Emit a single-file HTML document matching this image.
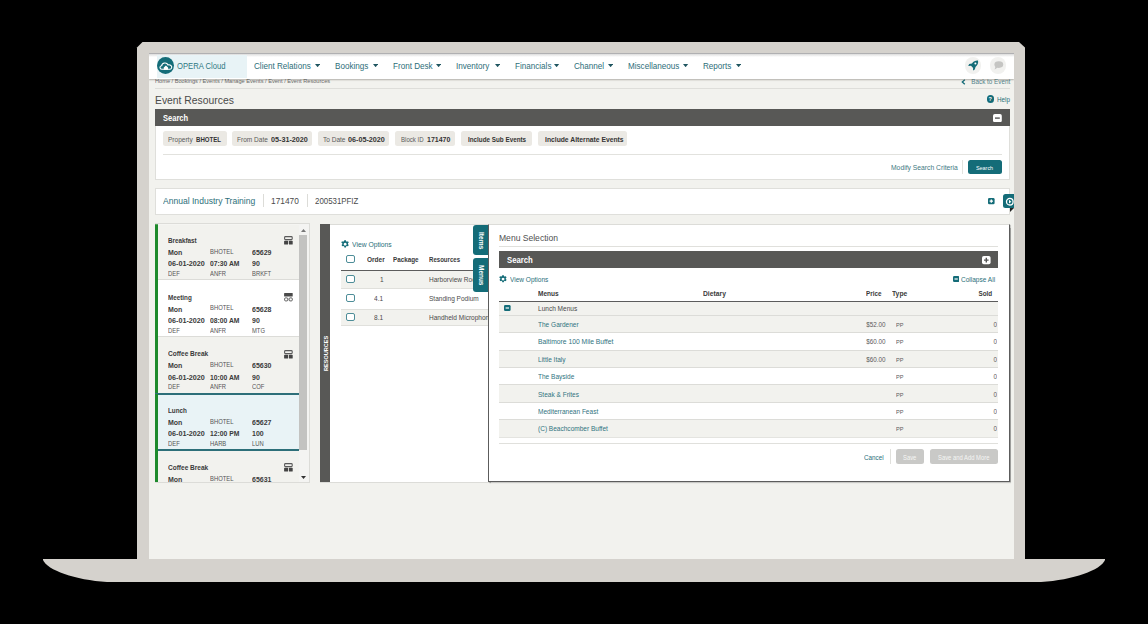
<!DOCTYPE html>
<html><head><meta charset="utf-8">
<style>
*{margin:0;padding:0;box-sizing:border-box}
html,body{width:1148px;height:624px;background:#000;overflow:hidden;font-family:"Liberation Sans",sans-serif}
.a{position:absolute}
.t{position:absolute;white-space:nowrap;line-height:1}
</style></head><body>
<svg class="a" style="left:0;top:0" width="1148" height="624"><path d="M137,47.5 L142.5,42 L1019,42 L1025,47.5 L1025,560 L137,560 Z" fill="#d5d2cd"/></svg>
<svg class="a" style="left:0;top:0" width="1148" height="624"><path d="M43,559 L1105,559 L1105,560 C1101,570 1073,580 1041,582 L107,582 C75,580 47,570 43,560 Z" fill="#d5d2cd"/></svg>
<div class="a" style="left:149px;top:53px;width:865px;height:506px;overflow:hidden;background:#f2f2ee"><div class="a" style="left:-149px;top:-53px;width:1148px;height:624px">
<div class="t" style="left:154.5px;transform-origin:0 0;top:78.00px;font-size:6.250px;color:#6a6a6a;transform:scaleX(0.9);">Home / Bookings / Events / Manage Events / Event / Event Resources</div>
<div class="a" style="left:155px;top:88px;width:855px;height:1px;background:#dededa;"></div>
<div class="t" style="right:138px;transform-origin:100% 0;top:78.00px;font-size:7.000px;color:#55828a;transform:scaleX(0.9);">Back to Event</div>
<svg class="a" style="left:961px;top:79px" width="5" height="6" viewBox="0 0 5 6"><path d="M3.8,0.8 L1.3,3 L3.8,5.2" fill="none" stroke="#146c78" stroke-width="1.3"/></svg>
<div class="a" style="left:149px;top:53px;width:865px;height:26px;background:#fff;border-top:1px solid #b0b0b2;box-shadow:0 1px 1.5px rgba(50,40,30,.33)"></div>
<div class="a" style="left:149px;top:54px;width:865px;height:2.5px;background:linear-gradient(#dcdcdc,#fff);"></div>
<div class="a" style="left:157px;top:54.5px;width:90px;height:23.8px;background:#e8f3f6;"></div>
<div class="a" style="left:157px;top:57px;width:17.4px;height:17.4px;border-radius:50%;background:#146c78"></div>
<svg class="a" style="left:157px;top:57px" width="17.4" height="17.4" viewBox="0 0 17 17"><path d="M4.6,12 C2.4,12 2.3,8.7 4.5,8.6 C5,5.4 9.6,4.8 10.7,7.7 C13,7.1 14.9,9 14.3,10.6 C14,11.5 13.4,12 12.7,12 Z" fill="none" stroke="#fff" stroke-width="1.1"/><path d="M6.6,12.4 L6.6,10.2 L8.7,8.4 L10.8,10.2 L10.8,12.4 Z" fill="#fff"/></svg>
<div class="t" style="left:177.2px;transform-origin:0 0;top:62.00px;font-size:8.500px;color:#2f7882;transform:scaleX(0.9);">OPERA Cloud</div>
<div class="t" style="left:254px;transform-origin:0 0;top:62.00px;font-size:9.000px;color:#2d6e79;transform:scaleX(0.9);">Client Relations</div>
<svg class="a" style="left:314.7px;top:64.2px" width="5.2" height="3.2" viewBox="0 0 5.2 3.2"><path d="M0,0 L5.2,0 L2.6,3.2 Z" fill="#1f5560"/></svg>
<div class="t" style="left:334.7px;transform-origin:0 0;top:62.00px;font-size:9.000px;color:#2d6e79;transform:scaleX(0.9);">Bookings</div>
<svg class="a" style="left:372.9px;top:64.2px" width="5.2" height="3.2" viewBox="0 0 5.2 3.2"><path d="M0,0 L5.2,0 L2.6,3.2 Z" fill="#1f5560"/></svg>
<div class="t" style="left:392.9px;transform-origin:0 0;top:62.00px;font-size:9.000px;color:#2d6e79;transform:scaleX(0.9);">Front Desk</div>
<svg class="a" style="left:436.0px;top:64.2px" width="5.2" height="3.2" viewBox="0 0 5.2 3.2"><path d="M0,0 L5.2,0 L2.6,3.2 Z" fill="#1f5560"/></svg>
<div class="t" style="left:455.6px;transform-origin:0 0;top:62.00px;font-size:9.000px;color:#2d6e79;transform:scaleX(0.9);">Inventory</div>
<svg class="a" style="left:495.2px;top:64.2px" width="5.2" height="3.2" viewBox="0 0 5.2 3.2"><path d="M0,0 L5.2,0 L2.6,3.2 Z" fill="#1f5560"/></svg>
<div class="t" style="left:514.8px;transform-origin:0 0;top:62.00px;font-size:9.000px;color:#2d6e79;transform:scaleX(0.9);">Financials</div>
<svg class="a" style="left:554.4px;top:64.2px" width="5.2" height="3.2" viewBox="0 0 5.2 3.2"><path d="M0,0 L5.2,0 L2.6,3.2 Z" fill="#1f5560"/></svg>
<div class="t" style="left:574px;transform-origin:0 0;top:62.00px;font-size:9.000px;color:#2d6e79;transform:scaleX(0.9);">Channel</div>
<svg class="a" style="left:608.0px;top:64.2px" width="5.2" height="3.2" viewBox="0 0 5.2 3.2"><path d="M0,0 L5.2,0 L2.6,3.2 Z" fill="#1f5560"/></svg>
<div class="t" style="left:627.6px;transform-origin:0 0;top:62.00px;font-size:9.000px;color:#2d6e79;transform:scaleX(0.9);">Miscellaneous</div>
<svg class="a" style="left:683.4px;top:64.2px" width="5.2" height="3.2" viewBox="0 0 5.2 3.2"><path d="M0,0 L5.2,0 L2.6,3.2 Z" fill="#1f5560"/></svg>
<div class="t" style="left:703.4px;transform-origin:0 0;top:62.00px;font-size:9.000px;color:#2d6e79;transform:scaleX(0.9);">Reports</div>
<svg class="a" style="left:736.1px;top:64.2px" width="5.2" height="3.2" viewBox="0 0 5.2 3.2"><path d="M0,0 L5.2,0 L2.6,3.2 Z" fill="#1f5560"/></svg>
<div class="a" style="left:964.6px;top:57.1px;width:16.8px;height:16.8px;border-radius:50%;background:#f1f1ef"></div>
<svg class="a" style="left:964.6px;top:57.1px" width="17" height="17" viewBox="0 0 17 17"><path d="M13,3.6 C10.8,3.3 8.6,4.3 7,6.4 L4.2,7.1 L3.2,8.9 L6,8.8 L8.1,10.9 L8,13.6 L9.8,12.6 L10.5,9.9 C12.6,8.3 13.6,6 13,3.6 Z" fill="#146c78"/><circle cx="10.4" cy="6.4" r="1" fill="#fff"/></svg>
<div class="a" style="left:989.6px;top:57.1px;width:16.8px;height:16.8px;border-radius:50%;background:#f1f1ef"></div>
<svg class="a" style="left:989.6px;top:57.1px" width="17" height="17" viewBox="0 0 17 17"><ellipse cx="8.8" cy="7.6" rx="4.4" ry="3.3" fill="#c5c5c3"/><path d="M5.6,9.2 L4.6,12.4 L7.8,10.4 Z" fill="#c5c5c3"/></svg>
<div class="t" style="left:154.8px;transform-origin:0 0;top:95.00px;font-size:11.500px;color:#4a4a4a;transform:scaleX(0.9);">Event Resources</div>
<div class="a" style="left:986.7px;top:95px;width:7.6px;height:7.6px;border-radius:50%;background:#146c78"></div>
<div class="t" style="left:988.6px;transform-origin:0 0;top:97.00px;font-size:5.500px;color:#fff;font-weight:bold;transform:scaleX(1);">?</div>
<div class="t" style="left:997px;transform-origin:0 0;top:96.00px;font-size:7.000px;color:#2a6f7a;transform:scaleX(0.9);">Help</div>
<div class="a" style="left:155px;top:109px;width:855px;height:71px;background:#fff;border:1px solid #dfdfdb"></div>
<div class="a" style="left:155px;top:109px;width:855px;height:16.7px;background:#585856;"></div>
<div class="t" style="left:162.6px;transform-origin:0 0;top:114.00px;font-size:8.750px;color:#fff;font-weight:bold;transform:scaleX(0.86);">Search</div>
<svg class="a" style="left:993.2px;top:113.8px" width="9" height="8.5" viewBox="0 0 9 8.5"><rect x="0" y="0" width="8.8" height="8.2" rx="1.8" fill="#fff"/><path d="M2,4.1 H6.8" stroke="#555" stroke-width="1.4"/></svg>
<div class="a" style="left:163.1px;top:131.1px;width:63.5px;height:14.7px;background:#ebe9e4;border-radius:2.5px"></div>
<div class="t" style="left:168px;transform-origin:0 0;top:136.00px;font-size:7.250px;color:#5a5a5a;transform:scaleX(0.9);">Property</div>
<div class="t" style="left:195.7px;transform-origin:0 0;top:137.00px;font-size:6.750px;color:#333;font-weight:bold;transform:scaleX(0.9);">BHOTEL</div>
<div class="a" style="left:232px;top:131.1px;width:79.80000000000001px;height:14.7px;background:#ebe9e4;border-radius:2.5px"></div>
<div class="t" style="left:236.9px;transform-origin:0 0;top:136.00px;font-size:7.250px;color:#5a5a5a;transform:scaleX(0.9);">From Date</div>
<div class="t" style="left:270.6px;transform-origin:0 0;top:136.00px;font-size:8.000px;color:#333;font-weight:bold;transform:scaleX(0.9);">05-31-2020</div>
<div class="a" style="left:317.8px;top:131.1px;width:71.39999999999998px;height:14.7px;background:#ebe9e4;border-radius:2.5px"></div>
<div class="t" style="left:322.6px;transform-origin:0 0;top:136.00px;font-size:7.250px;color:#5a5a5a;transform:scaleX(0.9);">To Date</div>
<div class="t" style="left:348.1px;transform-origin:0 0;top:136.00px;font-size:8.000px;color:#333;font-weight:bold;transform:scaleX(0.9);">06-05-2020</div>
<div class="a" style="left:395.2px;top:131.1px;width:59.69999999999999px;height:14.7px;background:#ebe9e4;border-radius:2.5px"></div>
<div class="t" style="left:400.6px;transform-origin:0 0;top:137.00px;font-size:6.750px;color:#5a5a5a;transform:scaleX(0.9);">Block ID</div>
<div class="t" style="left:426.7px;transform-origin:0 0;top:136.00px;font-size:7.750px;color:#333;font-weight:bold;transform:scaleX(0.9);">171470</div>
<div class="a" style="left:461px;top:131.1px;width:71px;height:14.7px;background:#ebe9e4;border-radius:2.5px"></div>
<div class="t" style="left:468px;transform-origin:0 0;top:136.00px;font-size:7.000px;color:#333;font-weight:bold;transform:scaleX(0.9);">Include Sub Events</div>
<div class="a" style="left:537.6px;top:131.1px;width:89.4px;height:14.7px;background:#ebe9e4;border-radius:2.5px"></div>
<div class="t" style="left:545px;transform-origin:0 0;top:136.00px;font-size:7.500px;color:#333;font-weight:bold;transform:scaleX(0.9);">Include Alternate Events</div>
<div class="a" style="left:163px;top:153.5px;width:839px;height:1px;background:#e2e2de;"></div>
<div class="t" style="left:891px;transform-origin:0 0;top:164.00px;font-size:7.500px;color:#3f7983;transform:scaleX(0.9);">Modify Search Criteria</div>
<div class="a" style="left:962.2px;top:160px;width:1px;height:14px;background:#e2e2de;"></div>
<div class="a" style="left:967.8px;top:159.5px;width:34.2px;height:14.8px;background:#146c78;border-radius:2.5px"></div>
<div class="t" style="left:975.7px;transform-origin:0 0;top:165.00px;font-size:6.000px;color:#fff;transform:scaleX(0.9);">Search</div>
<div class="a" style="left:155px;top:188.2px;width:855px;height:26.6px;background:#fff;border:1px solid #dfdfdb"></div>
<div class="t" style="left:162.6px;transform-origin:0 0;top:196.00px;font-size:9.500px;color:#2e6f7a;transform:scaleX(0.9);">Annual Industry Training</div>
<div class="a" style="left:263.2px;top:194px;width:1px;height:13px;background:#dcdcd8;"></div>
<div class="t" style="left:271.3px;transform-origin:0 0;top:197.00px;font-size:9.250px;color:#4a4a4a;transform:scaleX(0.9);">171470</div>
<div class="a" style="left:307px;top:194px;width:1px;height:13px;background:#dcdcd8;"></div>
<div class="t" style="left:315px;transform-origin:0 0;top:197.00px;font-size:8.750px;color:#4a4a4a;transform:scaleX(0.9);">200531PFIZ</div>
<svg class="a" style="left:988px;top:197.5px" width="7" height="7" viewBox="0 0 7 7"><rect x="0" y="0" width="6.6" height="6.3" rx="1.3" fill="#146c78"/><path d="M1.6,3.15 H5 M3.3,1.5 V4.8" stroke="#fff" stroke-width="1.3"/></svg>
<div class="a" style="left:1002.7px;top:193.8px;width:14px;height:14.2px;background:#146c78;border-radius:2.5px 0 0 2.5px"></div>
<svg class="a" style="left:1005px;top:196.5px" width="10" height="10" viewBox="0 0 10 10"><circle cx="4.8" cy="4.7" r="3.3" fill="#146c78" stroke="#fff" stroke-width="1.3"/><path d="M6.4,4.7 L4,2.8 L4,6.6 Z" fill="#fff"/></svg>
<svg class="a" style="left:1010px;top:208px" width="4" height="4"><path d="M0,4 L4,0 L0,0 Z" fill="#222"/></svg>
<div class="a" style="left:155px;top:223.3px;width:155px;height:259.5px;background:#fff;border:1px solid #dcdcd8"></div>
<div class="a" style="left:0;top:0;width:1148px;height:624px;clip-path:inset(224.3px 0 142px 0)">
<div class="a" style="left:155px;top:223.5px;width:144px;height:56.8px;background:#f2f2ee;"></div>
<div class="a" style="left:155px;top:279.3px;width:144px;height:1px;background:#dcdcd8;"></div>
<div class="a" style="left:155px;top:223.5px;width:3px;height:56.8px;background:#1e8a2c;"></div>
<div class="t" style="left:167.7px;transform-origin:0 0;top:237.00px;font-size:7.000px;color:#3a3a3a;font-weight:bold;transform:scaleX(0.9);">Breakfast</div>
<svg class="a" style="left:284px;top:236.1px" width="9" height="9" viewBox="0 0 9 9"><rect x="0.6" y="0.6" width="7.6" height="3" rx="0.8" fill="none" stroke="#5a5a5a" stroke-width="1.1"/><rect x="0.1" y="4.8" width="4" height="3.8" rx="0.6" fill="#444"/><rect x="4.9" y="4.8" width="3.8" height="3.8" rx="0.6" fill="#444"/></svg>
<div class="t" style="left:167.8px;transform-origin:0 0;top:249.00px;font-size:7.750px;color:#3a3a3a;font-weight:bold;transform:scaleX(0.9);">Mon</div>
<div class="t" style="left:209.6px;transform-origin:0 0;top:249.00px;font-size:6.500px;color:#555;transform:scaleX(0.9);">BHOTEL</div>
<div class="t" style="left:251.5px;transform-origin:0 0;top:249.00px;font-size:7.750px;color:#3a3a3a;font-weight:bold;transform:scaleX(0.9);">65629</div>
<div class="t" style="left:167.7px;transform-origin:0 0;top:260.00px;font-size:8.000px;color:#3a3a3a;font-weight:bold;transform:scaleX(0.9);">06-01-2020</div>
<div class="t" style="left:209.6px;transform-origin:0 0;top:260.00px;font-size:7.500px;color:#3a3a3a;font-weight:bold;transform:scaleX(0.9);">07:30 AM</div>
<div class="t" style="left:251.5px;transform-origin:0 0;top:260.00px;font-size:7.750px;color:#3a3a3a;font-weight:bold;transform:scaleX(0.9);">90</div>
<div class="t" style="left:167.7px;transform-origin:0 0;top:271.00px;font-size:6.500px;color:#555;transform:scaleX(0.9);">DEF</div>
<div class="t" style="left:209.6px;transform-origin:0 0;top:271.00px;font-size:6.500px;color:#555;transform:scaleX(0.9);">ANFR</div>
<div class="t" style="left:251.5px;transform-origin:0 0;top:271.00px;font-size:6.500px;color:#555;transform:scaleX(0.9);">BRKFT</div>
<div class="a" style="left:155px;top:280.3px;width:144px;height:56.8px;background:#fff;"></div>
<div class="a" style="left:155px;top:336.1px;width:144px;height:1px;background:#dcdcd8;"></div>
<div class="a" style="left:155px;top:280.3px;width:3px;height:56.8px;background:#1e8a2c;"></div>
<div class="t" style="left:167.7px;transform-origin:0 0;top:294.00px;font-size:7.000px;color:#3a3a3a;font-weight:bold;transform:scaleX(0.9);">Meeting</div>
<svg class="a" style="left:284px;top:292.9px" width="9" height="9" viewBox="0 0 9 9"><rect x="0.1" y="0" width="8.6" height="3.5" rx="0.5" fill="#4a4a4a"/><rect x="0.6" y="4.9" width="3.2" height="3" rx="1" fill="none" stroke="#5a5a5a" stroke-width="1"/><rect x="5.1" y="4.9" width="3.2" height="3" rx="1" fill="none" stroke="#5a5a5a" stroke-width="1"/></svg>
<div class="t" style="left:167.8px;transform-origin:0 0;top:306.00px;font-size:7.750px;color:#3a3a3a;font-weight:bold;transform:scaleX(0.9);">Mon</div>
<div class="t" style="left:209.6px;transform-origin:0 0;top:305.00px;font-size:6.500px;color:#555;transform:scaleX(0.9);">BHOTEL</div>
<div class="t" style="left:251.5px;transform-origin:0 0;top:306.00px;font-size:7.750px;color:#3a3a3a;font-weight:bold;transform:scaleX(0.9);">65628</div>
<div class="t" style="left:167.7px;transform-origin:0 0;top:317.00px;font-size:8.000px;color:#3a3a3a;font-weight:bold;transform:scaleX(0.9);">06-01-2020</div>
<div class="t" style="left:209.6px;transform-origin:0 0;top:317.00px;font-size:7.500px;color:#3a3a3a;font-weight:bold;transform:scaleX(0.9);">08:00 AM</div>
<div class="t" style="left:251.5px;transform-origin:0 0;top:317.00px;font-size:7.750px;color:#3a3a3a;font-weight:bold;transform:scaleX(0.9);">90</div>
<div class="t" style="left:167.7px;transform-origin:0 0;top:328.00px;font-size:6.500px;color:#555;transform:scaleX(0.9);">DEF</div>
<div class="t" style="left:209.6px;transform-origin:0 0;top:328.00px;font-size:6.500px;color:#555;transform:scaleX(0.9);">ANFR</div>
<div class="t" style="left:251.5px;transform-origin:0 0;top:328.00px;font-size:6.500px;color:#555;transform:scaleX(0.9);">MTG</div>
<div class="a" style="left:155px;top:337.1px;width:144px;height:56.8px;background:#f2f2ee;"></div>
<div class="a" style="left:155px;top:392.90000000000003px;width:144px;height:1px;background:#dcdcd8;"></div>
<div class="a" style="left:155px;top:337.1px;width:3px;height:56.8px;background:#1e8a2c;"></div>
<div class="t" style="left:167.7px;transform-origin:0 0;top:350.00px;font-size:7.250px;color:#3a3a3a;font-weight:bold;transform:scaleX(0.9);">Coffee Break</div>
<svg class="a" style="left:284px;top:349.7px" width="9" height="9" viewBox="0 0 9 9"><rect x="0.6" y="0.6" width="7.6" height="3" rx="0.8" fill="none" stroke="#5a5a5a" stroke-width="1.1"/><rect x="0.1" y="4.8" width="4" height="3.8" rx="0.6" fill="#444"/><rect x="4.9" y="4.8" width="3.8" height="3.8" rx="0.6" fill="#444"/></svg>
<div class="t" style="left:167.8px;transform-origin:0 0;top:362.00px;font-size:7.750px;color:#3a3a3a;font-weight:bold;transform:scaleX(0.9);">Mon</div>
<div class="t" style="left:209.6px;transform-origin:0 0;top:362.00px;font-size:6.500px;color:#555;transform:scaleX(0.9);">BHOTEL</div>
<div class="t" style="left:251.5px;transform-origin:0 0;top:362.00px;font-size:7.750px;color:#3a3a3a;font-weight:bold;transform:scaleX(0.9);">65630</div>
<div class="t" style="left:167.7px;transform-origin:0 0;top:374.00px;font-size:8.000px;color:#3a3a3a;font-weight:bold;transform:scaleX(0.9);">06-01-2020</div>
<div class="t" style="left:209.6px;transform-origin:0 0;top:374.00px;font-size:7.500px;color:#3a3a3a;font-weight:bold;transform:scaleX(0.9);">10:00 AM</div>
<div class="t" style="left:251.5px;transform-origin:0 0;top:374.00px;font-size:7.750px;color:#3a3a3a;font-weight:bold;transform:scaleX(0.9);">90</div>
<div class="t" style="left:167.7px;transform-origin:0 0;top:384.00px;font-size:6.500px;color:#555;transform:scaleX(0.9);">DEF</div>
<div class="t" style="left:209.6px;transform-origin:0 0;top:384.00px;font-size:6.500px;color:#555;transform:scaleX(0.9);">ANFR</div>
<div class="t" style="left:251.5px;transform-origin:0 0;top:384.00px;font-size:6.500px;color:#555;transform:scaleX(0.9);">COF</div>
<div class="a" style="left:155px;top:393.9px;width:144px;height:56.8px;background:#e9f3f6;"></div>
<div class="a" style="left:155px;top:449.7px;width:144px;height:1px;background:#dcdcd8;"></div>
<div class="a" style="left:155px;top:393.9px;width:3px;height:56.8px;background:#1e8a2c;"></div>
<div class="a" style="left:155px;top:393.4px;width:144px;height:1.5px;background:#2d6f79;"></div>
<div class="a" style="left:155px;top:449.2px;width:144px;height:1.5px;background:#2d6f79;"></div>
<div class="a" style="left:155px;top:393.9px;width:3px;height:56.8px;background:#1e8a2c;"></div>
<div class="t" style="left:167.7px;transform-origin:0 0;top:407.00px;font-size:7.000px;color:#3a3a3a;font-weight:bold;transform:scaleX(0.9);">Lunch</div>
<div class="t" style="left:167.8px;transform-origin:0 0;top:419.00px;font-size:7.750px;color:#3a3a3a;font-weight:bold;transform:scaleX(0.9);">Mon</div>
<div class="t" style="left:209.6px;transform-origin:0 0;top:419.00px;font-size:6.500px;color:#555;transform:scaleX(0.9);">BHOTEL</div>
<div class="t" style="left:251.5px;transform-origin:0 0;top:419.00px;font-size:7.750px;color:#3a3a3a;font-weight:bold;transform:scaleX(0.9);">65627</div>
<div class="t" style="left:167.7px;transform-origin:0 0;top:430.00px;font-size:8.000px;color:#3a3a3a;font-weight:bold;transform:scaleX(0.9);">06-01-2020</div>
<div class="t" style="left:209.6px;transform-origin:0 0;top:430.00px;font-size:7.500px;color:#3a3a3a;font-weight:bold;transform:scaleX(0.9);">12:00 PM</div>
<div class="t" style="left:251.5px;transform-origin:0 0;top:430.00px;font-size:7.750px;color:#3a3a3a;font-weight:bold;transform:scaleX(0.9);">100</div>
<div class="t" style="left:167.7px;transform-origin:0 0;top:441.00px;font-size:6.500px;color:#555;transform:scaleX(0.9);">DEF</div>
<div class="t" style="left:209.6px;transform-origin:0 0;top:441.00px;font-size:6.500px;color:#555;transform:scaleX(0.9);">HARB</div>
<div class="t" style="left:251.5px;transform-origin:0 0;top:441.00px;font-size:6.500px;color:#555;transform:scaleX(0.9);">LUN</div>
<div class="a" style="left:155px;top:450.7px;width:144px;height:56.8px;background:#f2f2ee;"></div>
<div class="a" style="left:155px;top:506.5px;width:144px;height:1px;background:#dcdcd8;"></div>
<div class="a" style="left:155px;top:450.7px;width:3px;height:56.8px;background:#1e8a2c;"></div>
<div class="t" style="left:167.7px;transform-origin:0 0;top:464.00px;font-size:7.250px;color:#3a3a3a;font-weight:bold;transform:scaleX(0.9);">Coffee Break</div>
<svg class="a" style="left:284px;top:463.3px" width="9" height="9" viewBox="0 0 9 9"><rect x="0.6" y="0.6" width="7.6" height="3" rx="0.8" fill="none" stroke="#5a5a5a" stroke-width="1.1"/><rect x="0.1" y="4.8" width="4" height="3.8" rx="0.6" fill="#444"/><rect x="4.9" y="4.8" width="3.8" height="3.8" rx="0.6" fill="#444"/></svg>
<div class="t" style="left:167.8px;transform-origin:0 0;top:476.00px;font-size:7.750px;color:#3a3a3a;font-weight:bold;transform:scaleX(0.9);">Mon</div>
<div class="t" style="left:209.6px;transform-origin:0 0;top:476.00px;font-size:6.500px;color:#555;transform:scaleX(0.9);">BHOTEL</div>
<div class="t" style="left:251.5px;transform-origin:0 0;top:476.00px;font-size:7.750px;color:#3a3a3a;font-weight:bold;transform:scaleX(0.9);">65631</div>
</div>
<div class="a" style="left:299px;top:224.3px;width:9.5px;height:258px;background:#f4f4f2;"></div>
<div class="a" style="left:299px;top:235.3px;width:8.2px;height:215px;background:#c3c3c1;"></div>
<svg class="a" style="left:300.5px;top:228.5px" width="5" height="3"><path d="M0,3 L5,3 L2.5,0 Z" fill="#777"/></svg>
<svg class="a" style="left:300.5px;top:475.5px" width="5" height="3"><path d="M0,0 L5,0 L2.5,3 Z" fill="#333"/></svg>
<div class="a" style="left:320.2px;top:223.5px;width:170px;height:259px;background:#fff;border:1px solid #dcdcd8"></div>
<div class="a" style="left:320.2px;top:223.8px;width:9.8px;height:258.7px;background:#585856;"></div>
<div class="t" style="left:322.8px;top:371px;font-size:6.2px;color:#fff;font-weight:bold;transform:rotate(-90deg) scaleX(0.9);transform-origin:0 0">RESOURCES</div>
<svg class="a" style="left:341px;top:240.4px" width="8.3" height="8.3" viewBox="0 0 16 16"><path fill="#146c78" fill-rule="evenodd" d="M6.5,0.3h3l0.45,2.1c0.55,0.2,1.05,0.45,1.5,0.8l2.05-0.75l1.5,2.6l-1.6,1.45c0.08,0.55,0.08,1.05,0,1.6l1.6,1.45l-1.5,2.6l-2.05-0.75c-0.45,0.35-0.95,0.6-1.5,0.8l-0.45,2.1h-3l-0.45-2.1c-0.55-0.2-1.05-0.45-1.5-0.8l-2.05,0.75l-1.5-2.6l1.6-1.45c-0.08-0.55-0.08-1.05,0-1.6L0.45,5.05l1.5-2.6l2.05,0.75c0.45-0.35,0.95-0.6,1.5-0.8z M8,5.2a2.8,2.8 0 1,0 0.01,0z"/></svg>
<div class="t" style="left:351.5px;transform-origin:0 0;top:241.00px;font-size:7.500px;color:#2a6f7a;transform:scaleX(0.9);">View Options</div>
<div class="a" style="left:346px;top:255.3px;width:8.8px;height:8.2px;border:1.2px solid #4d8d98;border-radius:2px;background:#fff"></div>
<div class="t" style="left:367px;transform-origin:0 0;top:256.00px;font-size:7.250px;color:#3a3a3a;font-weight:bold;transform:scaleX(0.9);">Order</div>
<div class="t" style="left:392.9px;transform-origin:0 0;top:256.00px;font-size:7.000px;color:#3a3a3a;font-weight:bold;transform:scaleX(0.9);">Package</div>
<div class="t" style="left:429px;transform-origin:0 0;top:257.00px;font-size:6.750px;color:#3a3a3a;font-weight:bold;transform:scaleX(0.9);">Resources</div>
<div class="a" style="left:341px;top:270.1px;width:149px;height:1.2px;background:#5c5c5c;"></div>
<div class="a" style="left:341px;top:271.3px;width:149px;height:17.099999999999966px;background:#f2f2ee;"></div>
<div class="a" style="left:341px;top:287.9px;width:149px;height:1px;background:#e0e0dc;"></div>
<div class="a" style="left:346px;top:274.8px;width:8.8px;height:8.2px;border:1.2px solid #4d8d98;border-radius:2px;background:#fff"></div>
<div class="t" style="left:380.2px;transform-origin:0 0;top:276.00px;font-size:7.250px;color:#4a4a4a;transform:scaleX(0.9);">1</div>
<div class="t" style="left:429px;transform-origin:0 0;top:276.00px;font-size:7.250px;color:#4a4a4a;transform:scaleX(0.9);">Harborview Room</div>
<div class="a" style="left:341px;top:289.4px;width:149px;height:19.700000000000045px;background:#fff;"></div>
<div class="a" style="left:341px;top:308.6px;width:149px;height:1px;background:#e0e0dc;"></div>
<div class="a" style="left:346px;top:294.3px;width:8.8px;height:8.2px;border:1.2px solid #4d8d98;border-radius:2px;background:#fff"></div>
<div class="t" style="left:373.6px;transform-origin:0 0;top:295.00px;font-size:7.250px;color:#4a4a4a;transform:scaleX(0.9);">4.1</div>
<div class="t" style="left:429px;transform-origin:0 0;top:295.00px;font-size:7.250px;color:#4a4a4a;transform:scaleX(0.9);">Standing Podium</div>
<div class="a" style="left:341px;top:310.1px;width:149px;height:15.5px;background:#f2f2ee;"></div>
<div class="a" style="left:341px;top:325.1px;width:149px;height:1px;background:#e0e0dc;"></div>
<div class="a" style="left:346px;top:312.6px;width:8.8px;height:8.2px;border:1.2px solid #4d8d98;border-radius:2px;background:#fff"></div>
<div class="t" style="left:373.6px;transform-origin:0 0;top:314.00px;font-size:7.250px;color:#4a4a4a;transform:scaleX(0.9);">8.1</div>
<div class="t" style="left:429px;transform-origin:0 0;top:314.00px;font-size:7.250px;color:#4a4a4a;transform:scaleX(0.9);">Handheld Microphone</div>
<div class="a" style="left:488.3px;top:223.5px;width:521.7px;height:258.5px;background:#fff;border:1px solid #5c5c5c;border-top-color:#dcdcd8;box-shadow:0.5px 1px 1px rgba(0,0,0,.35)"></div>
<div class="a" style="left:472.8px;top:224.5px;width:15.5px;height:30.4px;background:#146c78;border-radius:3px 0 0 3px"></div>
<div class="t" style="left:484.6px;top:231.5px;font-size:7.8px;color:#fff;font-weight:bold;transform:rotate(90deg) scaleX(0.85);transform-origin:0 0">Items</div>
<div class="a" style="left:472.8px;top:258.2px;width:15.5px;height:34.2px;background:#146c78;border-radius:3px 0 0 3px"></div>
<div class="t" style="left:484.6px;top:264.8px;font-size:7.6px;color:#fff;font-weight:bold;transform:rotate(90deg) scaleX(0.85);transform-origin:0 0">Menus</div>
<div class="t" style="left:499px;transform-origin:0 0;top:233.00px;font-size:9.500px;color:#505050;transform:scaleX(0.9);">Menu Selection</div>
<div class="a" style="left:499px;top:245.5px;width:499px;height:1px;background:#e0e0dc;"></div>
<div class="a" style="left:499px;top:251.3px;width:499px;height:16.6px;background:#585856;"></div>
<div class="t" style="left:506.8px;transform-origin:0 0;top:256.00px;font-size:9.000px;color:#fff;font-weight:bold;transform:scaleX(0.86);">Search</div>
<svg class="a" style="left:981.5px;top:256px" width="9" height="8.5" viewBox="0 0 9 8.5"><rect x="0" y="0" width="8.6" height="8.2" rx="1.8" fill="#fff"/><path d="M2,4.1 H6.6 M4.3,1.8 V6.4" stroke="#555" stroke-width="1.4"/></svg>
<svg class="a" style="left:499.1px;top:275.3px" width="8.1" height="8.1" viewBox="0 0 16 16"><path fill="#146c78" fill-rule="evenodd" d="M6.5,0.3h3l0.45,2.1c0.55,0.2,1.05,0.45,1.5,0.8l2.05-0.75l1.5,2.6l-1.6,1.45c0.08,0.55,0.08,1.05,0,1.6l1.6,1.45l-1.5,2.6l-2.05-0.75c-0.45,0.35-0.95,0.6-1.5,0.8l-0.45,2.1h-3l-0.45-2.1c-0.55-0.2-1.05-0.45-1.5-0.8l-2.05,0.75l-1.5-2.6l1.6-1.45c-0.08-0.55-0.08-1.05,0-1.6L0.45,5.05l1.5-2.6l2.05,0.75c0.45-0.35,0.95-0.6,1.5-0.8z M8,5.2a2.8,2.8 0 1,0 0.01,0z"/></svg>
<div class="t" style="left:509.8px;transform-origin:0 0;top:276.00px;font-size:7.250px;color:#2a6f7a;transform:scaleX(0.9);">View Options</div>
<svg class="a" style="left:952.8px;top:276.4px" width="6.5" height="6.5" viewBox="0 0 6.5 6.5"><rect x="0" y="0" width="6.3" height="6" rx="1.2" fill="#146c78"/><path d="M1.5,3 H4.8" stroke="#fff" stroke-width="1.2"/></svg>
<div class="t" style="left:960.7px;transform-origin:0 0;top:276.00px;font-size:7.250px;color:#2a6f7a;transform:scaleX(0.9);">Collapse All</div>
<div class="t" style="left:537.8px;transform-origin:0 0;top:290.00px;font-size:7.250px;color:#3a3a3a;font-weight:bold;transform:scaleX(0.9);">Menus</div>
<div class="t" style="left:703px;transform-origin:0 0;top:290.00px;font-size:7.500px;color:#3a3a3a;font-weight:bold;transform:scaleX(0.9);">Dietary</div>
<div class="t" style="left:866px;transform-origin:0 0;top:290.00px;font-size:7.000px;color:#3a3a3a;font-weight:bold;transform:scaleX(0.9);">Price</div>
<div class="t" style="left:892px;transform-origin:0 0;top:290.00px;font-size:7.500px;color:#3a3a3a;font-weight:bold;transform:scaleX(0.9);">Type</div>
<div class="t" style="right:155.60000000000002px;transform-origin:100% 0;top:290.00px;font-size:7.000px;color:#3a3a3a;font-weight:bold;transform:scaleX(0.9);">Sold</div>
<div class="a" style="left:499px;top:301px;width:499px;height:1.2px;background:#5c5c5c;"></div>
<div class="a" style="left:499px;top:302.2px;width:499px;height:13px;background:#f2f2ee;"></div>
<svg class="a" style="left:504px;top:304.8px" width="7" height="6.5" viewBox="0 0 7 6.5"><rect x="0" y="0" width="6.6" height="6" rx="1.3" fill="#146c78"/><path d="M1.6,3 H5" stroke="#fff" stroke-width="1.2"/></svg>
<div class="t" style="left:538px;transform-origin:0 0;top:305.00px;font-size:7.250px;color:#4a4a4a;transform:scaleX(0.9);">Lunch Menus</div>
<div class="a" style="left:499px;top:315.3px;width:499px;height:17.4px;background:#f2f2ee;"></div>
<div class="a" style="left:499px;top:314.8px;width:499px;height:1px;background:#dcdcd8;"></div>
<div class="t" style="left:538.3px;transform-origin:0 0;top:321.00px;font-size:7.250px;color:#2f7380;transform:scaleX(0.9);">The Gardener</div>
<div class="t" style="right:262.4px;transform-origin:100% 0;top:321.00px;font-size:7.000px;color:#5a5a5a;transform:scaleX(0.9);">$52.00</div>
<div class="t" style="left:895.6px;transform-origin:0 0;top:322.00px;font-size:6.250px;color:#5a5a5a;transform:scaleX(0.9);">PP</div>
<div class="t" style="right:151.60000000000002px;transform-origin:100% 0;top:321.00px;font-size:7.000px;color:#5a5a5a;transform:scaleX(0.9);">0</div>
<div class="a" style="left:499px;top:332.7px;width:499px;height:17.4px;background:#fff;"></div>
<div class="a" style="left:499px;top:332.2px;width:499px;height:1px;background:#dcdcd8;"></div>
<div class="t" style="left:538.3px;transform-origin:0 0;top:338.00px;font-size:7.500px;color:#2f7380;transform:scaleX(0.9);">Baltimore 100 Mile Buffet</div>
<div class="t" style="right:262.4px;transform-origin:100% 0;top:338.00px;font-size:7.000px;color:#5a5a5a;transform:scaleX(0.9);">$60.00</div>
<div class="t" style="left:895.6px;transform-origin:0 0;top:339.00px;font-size:6.250px;color:#5a5a5a;transform:scaleX(0.9);">PP</div>
<div class="t" style="right:151.60000000000002px;transform-origin:100% 0;top:338.00px;font-size:7.000px;color:#5a5a5a;transform:scaleX(0.9);">0</div>
<div class="a" style="left:499px;top:350.09999999999997px;width:499px;height:17.4px;background:#f2f2ee;"></div>
<div class="a" style="left:499px;top:349.59999999999997px;width:499px;height:1px;background:#dcdcd8;"></div>
<div class="t" style="left:538.3px;transform-origin:0 0;top:356.00px;font-size:7.250px;color:#2f7380;transform:scaleX(0.9);">Little Italy</div>
<div class="t" style="right:262.4px;transform-origin:100% 0;top:356.00px;font-size:7.000px;color:#5a5a5a;transform:scaleX(0.9);">$60.00</div>
<div class="t" style="left:895.6px;transform-origin:0 0;top:357.00px;font-size:6.250px;color:#5a5a5a;transform:scaleX(0.9);">PP</div>
<div class="t" style="right:151.60000000000002px;transform-origin:100% 0;top:356.00px;font-size:7.000px;color:#5a5a5a;transform:scaleX(0.9);">0</div>
<div class="a" style="left:499px;top:367.49999999999994px;width:499px;height:17.4px;background:#fff;"></div>
<div class="a" style="left:499px;top:366.99999999999994px;width:499px;height:1px;background:#dcdcd8;"></div>
<div class="t" style="left:538.3px;transform-origin:0 0;top:373.00px;font-size:7.250px;color:#2f7380;transform:scaleX(0.9);">The Bayside</div>
<div class="t" style="left:895.6px;transform-origin:0 0;top:374.00px;font-size:6.250px;color:#5a5a5a;transform:scaleX(0.9);">PP</div>
<div class="t" style="right:151.60000000000002px;transform-origin:100% 0;top:373.00px;font-size:7.000px;color:#5a5a5a;transform:scaleX(0.9);">0</div>
<div class="a" style="left:499px;top:384.8999999999999px;width:499px;height:17.4px;background:#f2f2ee;"></div>
<div class="a" style="left:499px;top:384.3999999999999px;width:499px;height:1px;background:#dcdcd8;"></div>
<div class="t" style="left:538.3px;transform-origin:0 0;top:391.00px;font-size:7.250px;color:#2f7380;transform:scaleX(0.9);">Steak &amp; Frites</div>
<div class="t" style="left:895.6px;transform-origin:0 0;top:392.00px;font-size:6.250px;color:#5a5a5a;transform:scaleX(0.9);">PP</div>
<div class="t" style="right:151.60000000000002px;transform-origin:100% 0;top:391.00px;font-size:7.000px;color:#5a5a5a;transform:scaleX(0.9);">0</div>
<div class="a" style="left:499px;top:402.2999999999999px;width:499px;height:17.4px;background:#fff;"></div>
<div class="a" style="left:499px;top:401.7999999999999px;width:499px;height:1px;background:#dcdcd8;"></div>
<div class="t" style="left:538.3px;transform-origin:0 0;top:408.00px;font-size:7.250px;color:#2f7380;transform:scaleX(0.9);">Mediterranean Feast</div>
<div class="t" style="left:895.6px;transform-origin:0 0;top:409.00px;font-size:6.250px;color:#5a5a5a;transform:scaleX(0.9);">PP</div>
<div class="t" style="right:151.60000000000002px;transform-origin:100% 0;top:408.00px;font-size:7.000px;color:#5a5a5a;transform:scaleX(0.9);">0</div>
<div class="a" style="left:499px;top:419.6999999999999px;width:499px;height:17.4px;background:#f2f2ee;"></div>
<div class="a" style="left:499px;top:419.1999999999999px;width:499px;height:1px;background:#dcdcd8;"></div>
<div class="a" style="left:499px;top:436.59999999999985px;width:499px;height:1px;background:#e4e4e0;"></div>
<div class="t" style="left:538.3px;transform-origin:0 0;top:425.00px;font-size:7.250px;color:#2f7380;transform:scaleX(0.9);">(C) Beachcomber Buffet</div>
<div class="t" style="left:895.6px;transform-origin:0 0;top:426.00px;font-size:6.250px;color:#5a5a5a;transform:scaleX(0.9);">PP</div>
<div class="t" style="right:151.60000000000002px;transform-origin:100% 0;top:425.00px;font-size:7.000px;color:#5a5a5a;transform:scaleX(0.9);">0</div>
<div class="a" style="left:499px;top:442.8px;width:499px;height:1px;background:#e0e0dc;"></div>
<div class="t" style="left:864.4px;transform-origin:0 0;top:454.00px;font-size:7.000px;color:#2a6f7a;transform:scaleX(0.9);">Cancel</div>
<div class="a" style="left:889.6px;top:449px;width:1px;height:15px;background:#e0e0dc;"></div>
<div class="a" style="left:895.6px;top:449.4px;width:28.4px;height:14.4px;background:#c9c9c7;border-radius:2.5px"></div>
<div class="t" style="left:903px;transform-origin:0 0;top:455.00px;font-size:6.500px;color:#f6f6f4;transform:scaleX(0.9);">Save</div>
<div class="a" style="left:929.9px;top:449.4px;width:68.2px;height:14.4px;background:#c9c9c7;border-radius:2.5px"></div>
<div class="t" style="left:937.7px;transform-origin:0 0;top:455.00px;font-size:6.500px;color:#f6f6f4;transform:scaleX(0.9);">Save and Add More</div>
</div></div>
</body></html>
